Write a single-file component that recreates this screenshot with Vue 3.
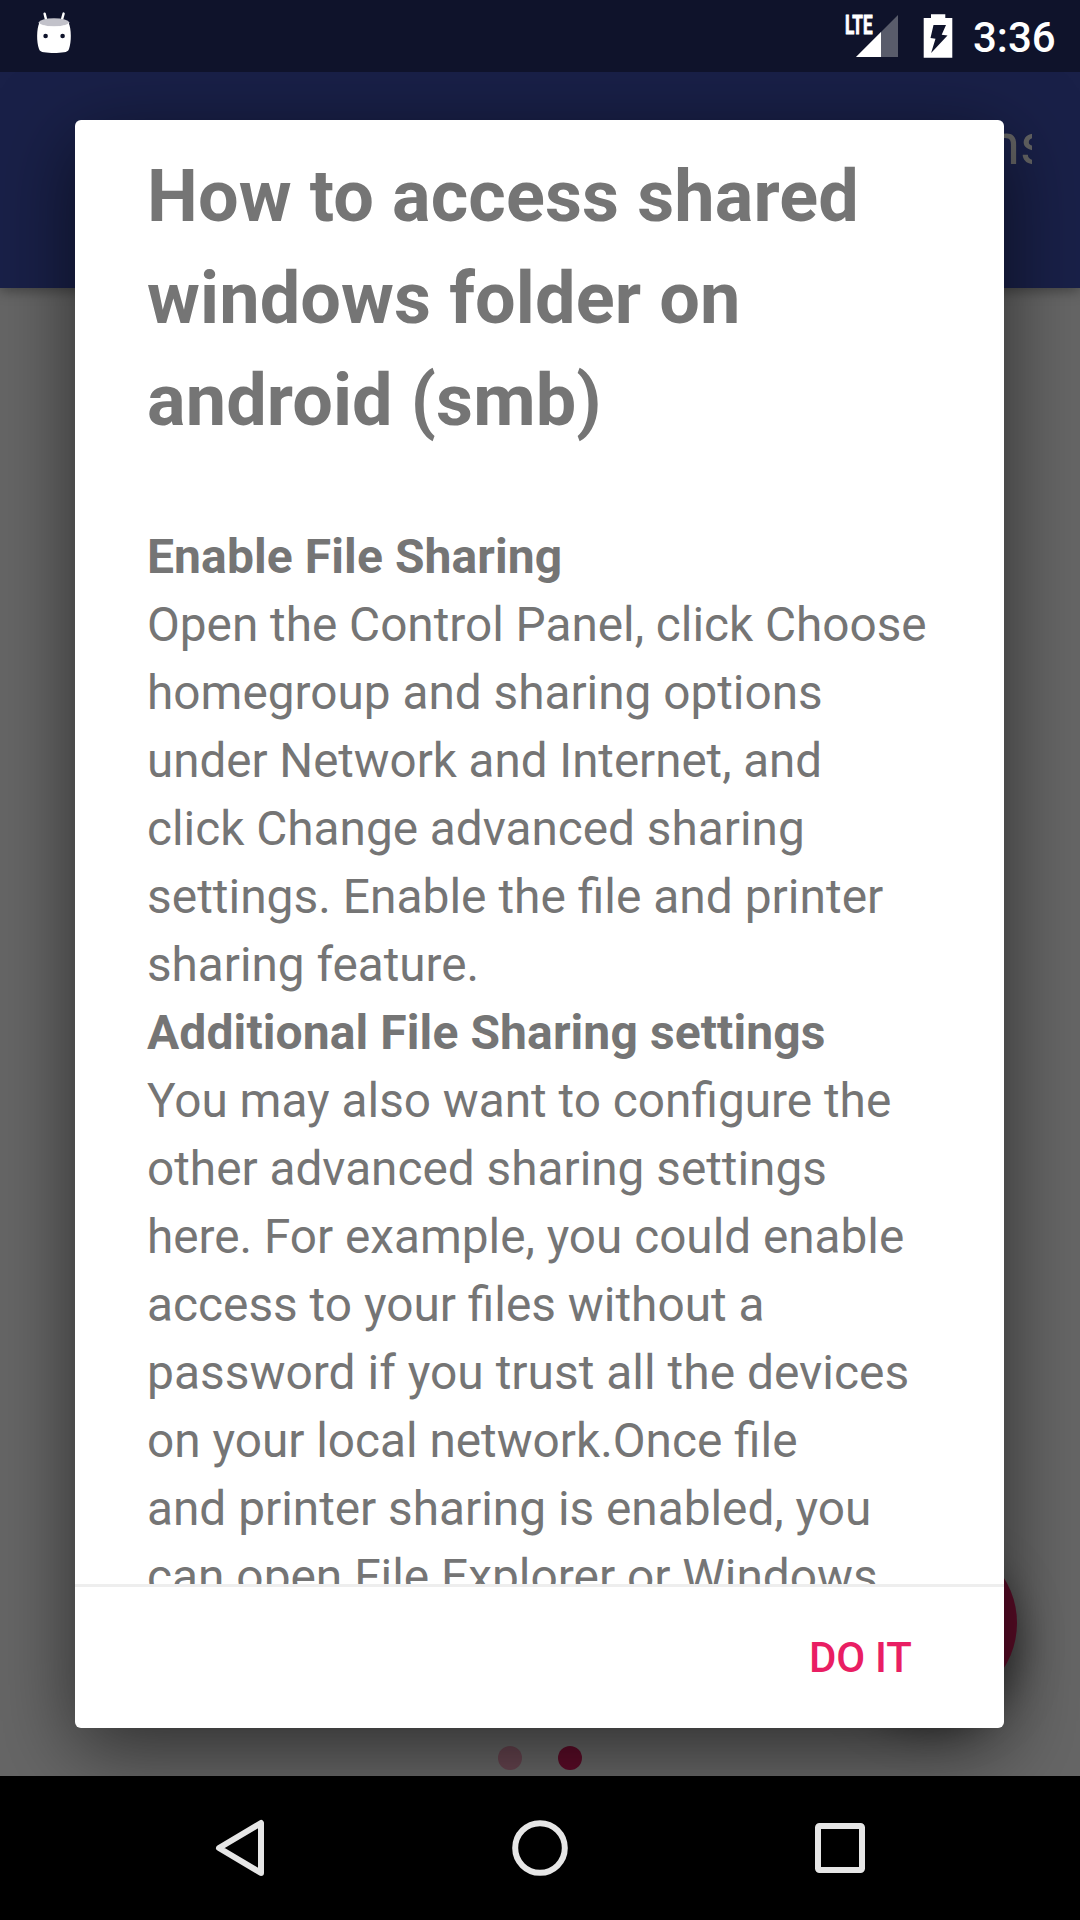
<script setup>
const title = ['How to access shared', 'windows folder on', 'android (smb)']

const sections = [
  {
    heading: 'Enable File Sharing',
    lines: [
      { text: 'Open the Control Panel, click Choose', fit: 0.9938 },
      { text: 'homegroup and sharing options', fit: 0.9946 },
      { text: 'under Network and Internet, and', fit: 0.9895 },
      { text: 'click Change advanced sharing', fit: 0.9944 },
      { text: 'settings. Enable the file and printer', fit: 0.9983 },
      { text: 'sharing feature.', fit: 0.993 },
    ],
  },
  {
    heading: 'Additional File Sharing settings',
    lines: [
      { text: 'You may also want to configure the', fit: 0.995 },
      { text: 'other advanced sharing settings', fit: 0.9946 },
      { text: 'here. For example, you could enable', fit: 0.9936 },
      { text: 'access to your files without a', fit: 0.996 },
      { text: 'password if you trust all the devices', fit: 0.9984 },
      { text: 'on your local network.Once file', fit: 0.9944 },
      { text: 'and printer sharing is enabled, you', fit: 0.995 },
      { text: 'can open File Explorer or Windows', fit: 0.9966 },
    ],
  },
]
</script>

<template>
  <div class="screen">
    <header class="status-bar">
      <svg class="robot" width="36" height="42" viewBox="0 0 36 42">
        <path d="M8.6 1.6 10.6 9.6M27.6 1.6 25.4 9.6" stroke="#fff" stroke-width="2.4" stroke-linecap="round" />
        <path d="M3.3 11C.6 17 .4 30 3 37c.8 2.200 2.400 2.900 5 3.300 6 1 14 1 20 0 2.600-.4 4.200-1.100 5-3.300 2.600-7 2.400-20-.3-26z" fill="#fff" />
        <ellipse cx="18" cy="10.400" rx="15" ry="4.200" fill="#c2c2ca" />
        <path d="M3 10.400c0 2.700 6.700 4.500 15 4.500s15-1.800 15-4.500" fill="none" stroke="#fff" stroke-width="1" />
        <circle cx="9.600" cy="24" r="2.300" fill="#0f132b" />
        <circle cx="26.600" cy="24" r="2.300" fill="#0f132b" />
      </svg>
      <div class="status-right">
        <svg class="signal" width="56" height="46" viewBox="844 13 56 46">
          <text x="845" y="33.500" class="lte" textLength="27.500" lengthAdjust="spacingAndGlyphs">LTE</text>
          <path d="M898 15V57H856z" fill="#595c6b" />
          <path d="M881 32V57H856z" fill="#fff" />
        </svg>
        <svg width="30" height="46" viewBox="922.500 13 30 46">
          <path d="M930.500 14.300h14.300v3.700h7V57.700h-28.600V18h7.300z" fill="#fff" />
          <path d="M933 25h12.500l-4.300 9.700 5.800.9L930.600 53l4.400-14.200-5-.8z" fill="#0f132b" />
        </svg>
        <span class="time">3:36</span>
      </div>
    </header>

    <div class="app-bar"><div class="tabs">ns</div></div>

    <main class="page">
      <div class="dots"><i></i><i class="active"></i></div>
    </main>

    <nav class="nav-bar">
      <svg width="60" height="60" viewBox="0 0 60 60"><path d="M51 5V55L9 30z" class="glyph" /></svg>
      <svg width="60" height="60" viewBox="0 0 60 60"><circle cx="30" cy="30" r="24.800" class="glyph" /></svg>
      <svg width="60" height="60" viewBox="0 0 60 60"><rect x="8" y="8" width="44" height="44" rx="1.500" class="glyph" /></svg>
    </nav>

    <div class="fab"></div>

    <section class="dialog">
      <div class="content">
        <h1><span v-for="l in title" :key="l">{{ l }}</span></h1>
        <article v-for="s in sections" :key="s.heading">
          <h2>{{ s.heading }}</h2>
          <span v-for="l in s.lines" :key="l.text" :style="{ transform: `scaleX(${l.fit})` }">{{ l.text }}</span>
        </article>
      </div>
      <footer class="actions"><button>DO IT</button></footer>
    </section>
  </div>
</template>

<style>
body {
  margin: 0;
}
</style>

<style scoped>
.screen {
  position: relative;
  display: flex;
  flex-direction: column;
  width: 1080px;
  height: 1920px;
  overflow: hidden;
  background: #666;
  font-family: Roboto, sans-serif;
}
.status-bar {
  position: relative;
  z-index: 4;
  display: flex;
  flex: none;
  justify-content: space-between;
  box-sizing: border-box;
  height: 72px;
  padding: 12px 25.5px 0 36px;
  background: #0f132b;
}
.status-right {
  display: flex;
  padding-top: 1px;
}
.status-right svg + svg {
  margin-left: 22.5px;
}
.signal {
  overflow: visible;
}
.lte {
  font: 700 26px Roboto, sans-serif;
  fill: #fff;
  stroke: #fff;
  stroke-width: 0.9px;
}
.time {
  width: 81.5px;
  margin-left: 20.5px;
  color: #fff;
  font-size: 42px;
  font-weight: 500;
  line-height: 49px;
  white-space: nowrap;
}
.app-bar {
  position: relative;
  z-index: 1;
  flex: none;
  height: 216px;
  background: #192048;
  box-shadow: 0 3px 12px rgba(0, 0, 0, 0.35);
}
.tabs {
  box-sizing: border-box;
  width: 1032px;
  height: 150px;
  padding: 37px 0 0 988.5px;
  overflow: hidden;
  color: #646464;
  font-size: 57px;
  line-height: 72px;
}
.page {
  display: flex;
  flex: 1;
  align-items: flex-end;
  justify-content: center;
}
.dots {
  display: flex;
  gap: 36px;
  padding-bottom: 6px;
}
.dots i {
  width: 24px;
  height: 24px;
  border-radius: 50%;
  background: #66444f;
}
.dots .active {
  background: #5d0c28;
}
.nav-bar {
  position: relative;
  z-index: 4;
  display: flex;
  flex: none;
  justify-content: center;
  align-items: center;
  gap: 240px;
  height: 144px;
  background: #000;
}
.glyph {
  fill: none;
  stroke: #e6e6e6;
  stroke-width: 6;
  stroke-linejoin: round;
}
.fab {
  position: absolute;
  left: 849px;
  top: 1539px;
  width: 168px;
  height: 168px;
  border-radius: 50%;
  background: #5d0c28;
  box-shadow: 0 18px 42px rgba(0, 0, 0, 0.5);
}
.dialog {
  position: absolute;
  z-index: 3;
  left: 75px;
  top: 120px;
  display: flex;
  flex-direction: column;
  width: 929px;
  height: 1608px;
  border-radius: 6px;
  background: #fff;
  box-shadow: 0 20px 80px rgba(0, 0, 0, 0.56);
}
.content {
  box-sizing: border-box;
  height: 1464px;
  padding: 26px 0 0 72px;
  overflow: hidden;
  color: #757575;
  font-size: 48px;
  line-height: 68px;
  white-space: nowrap;
}
.content span {
  display: block;
  transform-origin: 0 50%;
}
h1 {
  margin: 0 0 71px;
  font-size: 72px;
  line-height: 102px;
  letter-spacing: 0.12px;
}
h2 {
  margin: 0;
  font-size: 48px;
  line-height: 68px;
  letter-spacing: 0.1px;
}
h1,
h2 {
  font-weight: 700;
}
.actions {
  display: flex;
  flex: 1;
  justify-content: flex-end;
  align-items: center;
  padding-right: 92.5px;
  border-top: 3px solid #eee;
}
button {
  padding: 0;
  border: 0;
  background: none;
  color: #e91e63;
  font: 500 42px Roboto, sans-serif;
  letter-spacing: -0.25px;
}
</style>
